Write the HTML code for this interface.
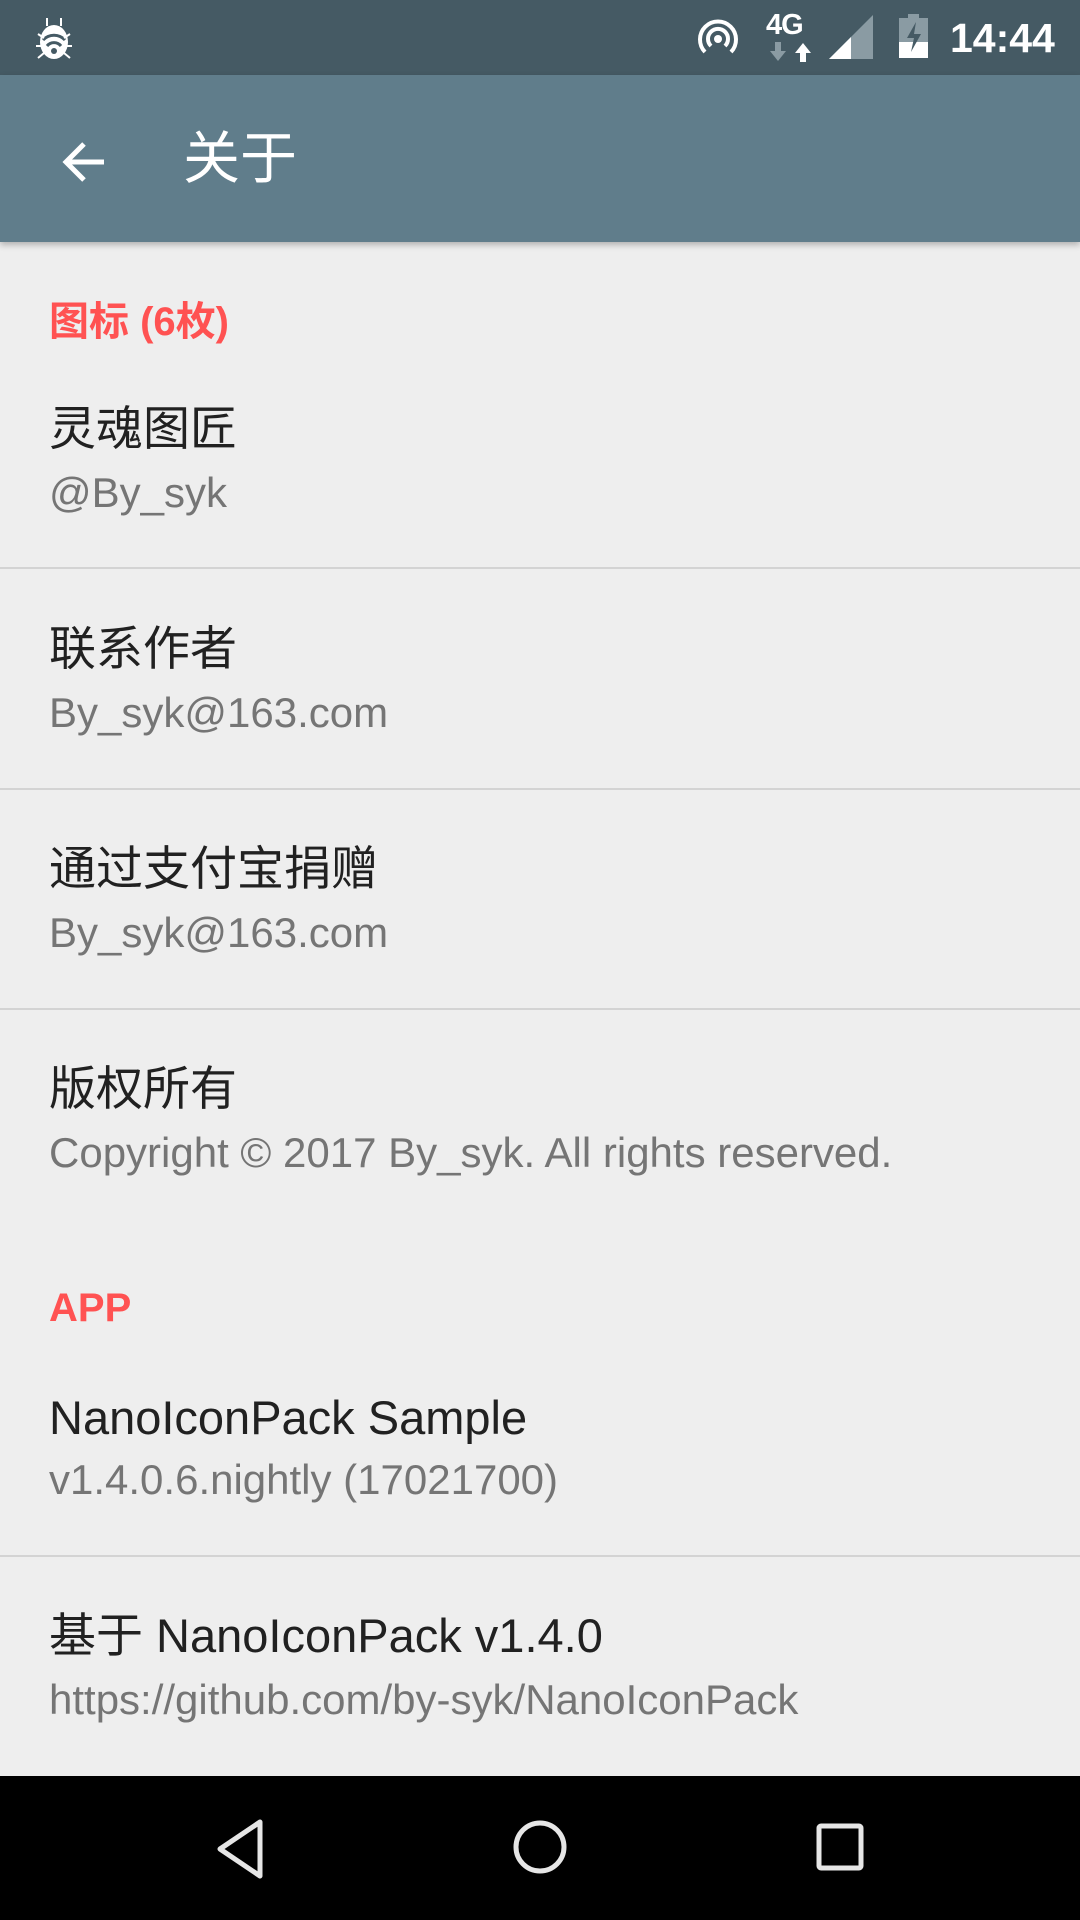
<!DOCTYPE html>
<html><head><meta charset="utf-8"><style>
*{margin:0;padding:0;box-sizing:border-box}
body{width:1080px;height:1920px;background:#eeeeee;position:relative;overflow:hidden;font-family:"Liberation Sans","Noto Sans CJK SC",sans-serif}
.sb{position:absolute;left:0;top:0;width:1080px;height:75px;background:#455a64}
.ab{position:absolute;left:0;top:75px;width:1080px;height:167px;background:#607d8b;box-shadow:0 3px 6px rgba(0,0,0,.25)}
.t{position:absolute;left:49px;white-space:nowrap;line-height:60px}
.cat{color:#ff5252;font-size:40px;font-weight:bold}
.p{color:#212121;font-size:47px}
.s{color:#757575;font-size:42px}
.d{position:absolute;left:0;width:1080px;height:2px;background:#d3d3d3}
.nav{position:absolute;left:0;top:1776px;width:1080px;height:144px;background:#000}
</style></head><body>
<div class="sb">
<svg style="position:absolute;left:30px;top:14px" width="48" height="48" viewBox="0 0 48 48"><g fill="#fff"><ellipse cx="24" cy="28" rx="14" ry="17"/><rect x="16" y="4" width="2" height="8"/><rect x="30" y="4" width="2" height="8"/></g><g fill="none" stroke="#455a64" stroke-width="3"><path d="M13 26a15 15 0 0 1 22 0"/><path d="M17 32a9 9 0 0 1 14 0"/></g><circle cx="24" cy="37" r="3" fill="#455a64"/><path d="M8 20l6 4M40 20l-6 4M6 32h7M42 32h-7M8 44l6-5M40 44l-6-5" stroke="#fff" stroke-width="2"/></svg>
<svg style="position:absolute;left:697px;top:18px" width="42" height="42" viewBox="0 0 42 42"><g fill="none" stroke="#fff" stroke-width="4"><path d="M8 34A18 18 0 1 1 34 34"/><path d="M14 28A10 10 0 1 1 28 28"/></g><circle cx="21" cy="21" r="4" fill="#fff"/></svg>
<div style="position:absolute;left:766px;top:9px;color:#fff;font-size:29px;font-weight:bold;letter-spacing:-1px">4G</div>
<svg style="position:absolute;left:770px;top:42px" width="45" height="20" viewBox="0 0 45 20"><path d="M5 0h6v9h5l-8 10-8-10h5z" fill="#8a9ba3"/><path d="M30 20h6v-9h5l-8-10-8 10h5z" fill="#fff"/></svg>
<svg style="position:absolute;left:829px;top:15px" width="45" height="45" viewBox="0 0 45 45"><path d="M0 44L44 0V44z" fill="#8a9ba3"/><path d="M0 44L22 22V44z" fill="#fff"/></svg>
<svg style="position:absolute;left:899px;top:14px" width="29" height="44" viewBox="0 0 29 44"><rect x="9" y="0" width="11" height="4" fill="#8a9ba3"/><rect x="0" y="4" width="29" height="40" fill="#8a9ba3"/><rect x="0" y="28" width="29" height="16" fill="#fff"/><path d="M17 8L8 24h7l-3 14 10-18h-7z" fill="#455a64"/></svg>
<div style="position:absolute;left:950px;top:14px;color:#fff;font-size:41px;font-weight:bold;line-height:48px">14:44</div>
</div>
<div class="ab">
<svg style="position:absolute;left:60px;top:63px" width="48" height="48" viewBox="0 0 48 48"><path d="M44 24H8M24 6L6 24l18 18" fill="none" stroke="#fff" stroke-width="5"/></svg>
<div style="position:absolute;left:183px;top:50px;color:#fff;font-size:57px;line-height:68px">关于</div>
</div>
<div class="t cat" style="top:292px">图标 (6枚)</div>
<div class="t p" style="top:399px">灵魂图匠</div>
<div class="t s" style="top:463px">@By_syk</div>
<div class="d" style="top:567px"></div>
<div class="t p" style="top:619px">联系作者</div>
<div class="t s" style="top:683px">By_syk@163.com</div>
<div class="d" style="top:788px"></div>
<div class="t p" style="top:839px">通过支付宝捐赠</div>
<div class="t s" style="top:903px">By_syk@163.com</div>
<div class="d" style="top:1008px"></div>
<div class="t p" style="top:1059px">版权所有</div>
<div class="t s" style="top:1123px">Copyright © 2017 By_syk. All rights reserved.</div>
<div class="t cat" style="top:1278px">APP</div>
<div class="t p" style="top:1388px">NanoIconPack Sample</div>
<div class="t s" style="top:1450px">v1.4.0.6.nightly (17021700)</div>
<div class="d" style="top:1555px"></div>
<div class="t p" style="top:1606px">基于 NanoIconPack v1.4.0</div>
<div class="t s" style="top:1670px">https://github.com/by-syk/NanoIconPack</div>
<div class="nav">
<svg style="position:absolute;left:210px;top:42px" width="60" height="62" viewBox="0 0 60 62"><path d="M50 4L10 31l40 27z" fill="none" stroke="#e6e6e6" stroke-width="5" stroke-linejoin="round"/></svg>
<svg style="position:absolute;left:510px;top:41px" width="60" height="60" viewBox="0 0 60 60"><circle cx="30" cy="30" r="24" fill="none" stroke="#e6e6e6" stroke-width="5"/></svg>
<svg style="position:absolute;left:815px;top:46px" width="50" height="50" viewBox="0 0 50 50"><rect x="4" y="4" width="42" height="42" rx="2" fill="none" stroke="#e6e6e6" stroke-width="5"/></svg>
</div>
</body></html>
